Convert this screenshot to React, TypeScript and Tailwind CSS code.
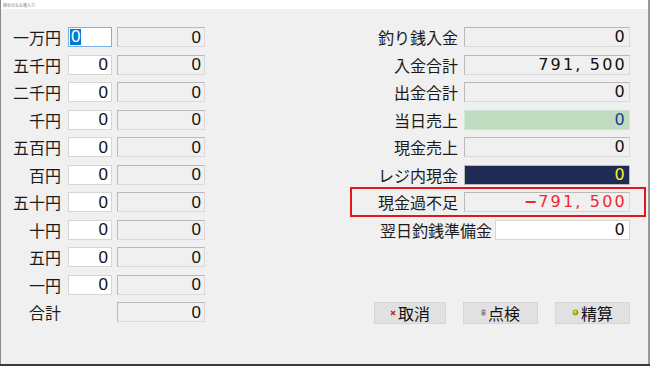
import React from "react";

const jp = "font-['Noto_Sans_CJK_JP',sans-serif]";
const leftNum = "font-['Liberation_Sans','Noto_Sans_CJK_JP',sans-serif] text-[17px]";
const rightNum = "font-['DejaVu_Sans','Noto_Sans_CJK_JP',sans-serif] text-[16px] tracking-[2.2px]";

const denoms = ["一万円", "五千円", "二千円", "千円", "五百円", "百円", "五十円", "十円", "五円", "一円"];

function ReadOnly({ w, children, cls = "" }: { w: string; children: React.ReactNode; cls?: string }) {
  return (
    <div
      className={`${w} h-[20px] border border-t-[#b9b9b9] border-l-[#b9b9b9] border-r-[#d9d9d9] border-b-[#d9d9d9] bg-[#f0f0f0] flex items-center justify-end pr-[2px] leading-none ${cls}`}
    >
      {children}
    </div>
  );
}

function Btn({ w, icon, label }: { w: string; icon: React.ReactNode; label: string }) {
  return (
    <div
      className={`${w} h-[22px] bg-[#e1e1e1] border border-[#d6d6d6] flex items-center justify-center gap-[1px] ${jp} text-[16px] text-[#111] leading-none`}
    >
      {icon}
      <span>{label}</span>
    </div>
  );
}

export default function App() {
  return (
    <div className="w-[650px] h-[366px] bg-[#3a3a3a] overflow-hidden">
      <div className="w-[650px] h-[364px] flex flex-col bg-[#f0f0f0] border-l border-l-[#8a8a8a] border-r-2 border-r-[#9a9a9a]">
        <div className="h-[9px] bg-white flex items-center pl-[2px]">
          <span className={`${jp} text-[4px] leading-none text-[#888]`}>締め出金金種入力</span>
        </div>
        <div className="flex flex-1">
          {/* left column */}
          <div className="w-[339px] pt-[18px] flex flex-col gap-y-[7.5px]">
            {denoms.map((d, i) => (
              <div key={d} className="flex items-center h-[20px]">
                <div className={`w-[60px] text-right ${jp} text-[16px] text-[#1a1a1a] leading-none`}>{d}</div>
                <div className="w-[7px]" />
                {i === 0 ? (
                  <div className="w-[44px] h-[20px] bg-white border border-[#7ab0e6] flex items-center pl-[1px]">
                    <span className={`${leftNum} bg-[#0078d7] text-white leading-[16px] px-[1px]`}>0</span>
                  </div>
                ) : (
                  <div className={`w-[44px] h-[20px] bg-white border border-[#d6d6d6] flex items-center justify-end pr-[3px] ${leftNum} text-[#111] leading-none`}>
                    0
                  </div>
                )}
                <div className="w-[5px]" />
                <ReadOnly w="w-[88px]" cls={`${leftNum} text-[#111] pr-[3px]`}>0</ReadOnly>
              </div>
            ))}
            <div className="flex items-center h-[20px]">
              <div className={`w-[60px] text-right ${jp} text-[16px] text-[#1a1a1a] leading-none`}>合計</div>
              <div className="w-[56px]" />
              <ReadOnly w="w-[88px]" cls={`${leftNum} text-[#111] pr-[3px]`}>0</ReadOnly>
            </div>
          </div>

          {/* right column */}
          <div className="w-[290px] pt-[18px] flex flex-col">
            <div className="flex flex-col gap-y-[7.5px]">
              {[
                { l: "釣り銭入金", v: "0", cls: "" },
                { l: "入金合計", v: "791, 500", cls: "" },
                { l: "出金合計", v: "0", cls: "" },
                { l: "当日売上", v: "0", cls: "green" },
                { l: "現金売上", v: "0", cls: "" },
                { l: "レジ内現金", v: "0", cls: "navy" },
                { l: "現金過不足", v: "791, 500", cls: "red" },
              ].map((r) => (
                <div key={r.l} className="relative flex items-center justify-end gap-[6px] h-[20px]">
                  {r.cls === "red" && (
                    <div className="absolute left-[10px] right-[-16px] top-[-5px] bottom-[-5px] border-2 border-[#e4161d]" />
                  )}
                  <div className={`${jp} text-[16px] text-[#1a1a1a] leading-none`}>{r.l}</div>
                  {r.cls === "green" ? (
                    <div className={`w-[166px] h-[20px] border border-[#d2e4d2] bg-[#c0dcc0] flex items-center justify-end pr-[2px] ${rightNum} text-[#1b3d8f] leading-none`}>
                      {r.v}
                    </div>
                  ) : r.cls === "navy" ? (
                    <div className={`w-[166px] h-[20px] border border-[#b9b9b9] bg-[#1f2a55] flex items-center justify-end pr-[2px] ${rightNum} text-[#f2f227] leading-none`}>
                      {r.v}
                    </div>
                  ) : (
                    <ReadOnly w="w-[166px]" cls={`${rightNum} ${r.cls === "red" ? "text-[#f0262e]" : "text-[#111]"}`}>
                      {r.cls === "red" && (
                        <span className="font-['DejaVu_Sans',sans-serif] font-bold tracking-normal mr-[1px]">−</span>
                      )}
                      {r.v}
                    </ReadOnly>
                  )}
                </div>
              ))}
              <div className="flex items-center justify-end gap-[3px] h-[20px]">
                <div className={`${jp} text-[16px] text-[#1a1a1a] leading-none`}>翌日釣銭準備金</div>
                <div className={`w-[135px] h-[20px] bg-white border border-[#d6d6d6] flex items-center justify-end pr-[2px] ${rightNum} text-[#111] leading-none`}>
                  0
                </div>
              </div>
            </div>

            <div className="mt-[62px] flex justify-end gap-[17px]">
              <Btn
                w="w-[72px]"
                label="取消"
                icon={
                  <svg width="6" height="6" viewBox="0 0 6 6" className="mr-[1px]">
                    <path d="M1 1L5 5M5 1L1 5" stroke="#c0262b" strokeWidth="1.5" />
                  </svg>
                }
              />
              <Btn
                w="w-[75px]"
                label="点検"
                icon={
                  <svg width="5" height="7" viewBox="0 0 5 7" className="mr-[1px]">
                    <rect x="0.5" y="0.5" width="4" height="6" rx="1" fill="#8a8a8a" />
                    <rect x="1.5" y="2" width="2" height="1" fill="#cfcfcf" />
                  </svg>
                }
              />
              <Btn
                w="w-[75px]"
                label="精算"
                icon={
                  <svg width="7" height="7" viewBox="0 0 7 7" className="mr-[1px]">
                    <circle cx="3.5" cy="3.5" r="3" fill="#a8a51c" />
                    <circle cx="3" cy="3" r="1.4" fill="#d9d84a" />
                  </svg>
                }
              />
            </div>
          </div>
        </div>
      </div>
    </div>
  );
}
